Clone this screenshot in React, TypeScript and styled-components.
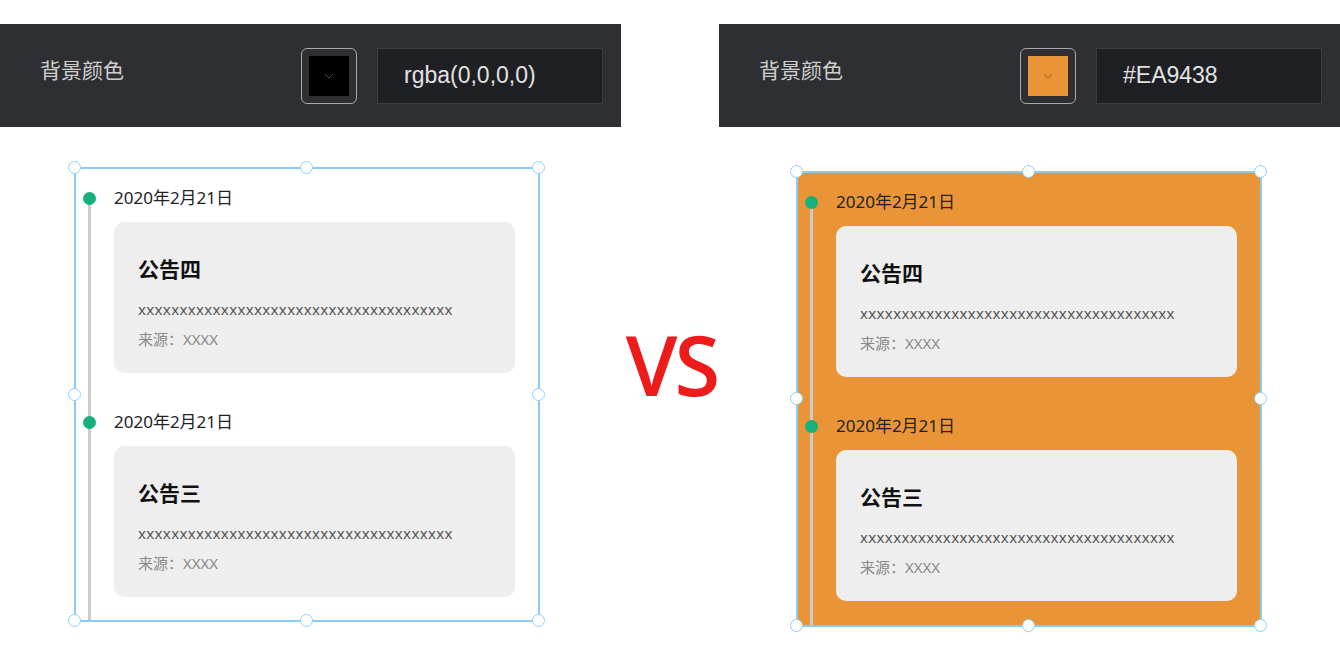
import React from 'react';
import styled, { createGlobalStyle } from 'styled-components';

const GlobalStyle = createGlobalStyle`
  html, body {
    margin: 0;
    padding: 0;
    background: #ffffff;
  }
  body {
    font-family: "Noto Sans", "Noto Sans CJK SC", sans-serif;
  }
`;

const Page = styled.div`
  display: flex;
  width: 1340px;
  height: 661px;
  padding-top: 24px;
  box-sizing: border-box;
  overflow: hidden;
`;

const Column = styled.div`
  display: flex;
  flex-direction: column;
  width: 621px;
  flex-shrink: 0;
`;

const Middle = styled.div`
  width: 98px;
  flex-shrink: 0;
  display: flex;
  justify-content: center;
  padding-top: 298px;
`;

const Versus = styled.div`
  font-family: "Open Sans", "Liberation Sans", sans-serif;
  font-size: 83px;
  font-weight: 600;
  line-height: 1;
  color: #ee1b1b;
  letter-spacing: -3px;
  height: 90px;
  padding-left: 3px;
`;

const Toolbar = styled.div`
  display: flex;
  align-items: center;
  height: 103px;
  padding: 0 18px 0 40px;
  background: #2e2f33;
`;

const Label = styled.div`
  flex: 1;
  margin-bottom: 14px;
  font-family: "Noto Sans CJK SC", sans-serif;
  font-size: 21px;
  color: #cfcfcf;
`;

const Swatch = styled.div`
  display: flex;
  align-items: center;
  justify-content: center;
  width: 56px;
  height: 56px;
  box-sizing: border-box;
  border: 1.5px solid #a9a9a9;
  border-radius: 6px;
`;

const SwatchFill = styled.div<{ $color: string }>`
  display: flex;
  align-items: center;
  justify-content: center;
  width: 40px;
  height: 40px;
  background: ${(p) => p.$color};
`;

const ColorInput = styled.div`
  display: flex;
  align-items: center;
  width: 226px;
  height: 56px;
  margin-left: 20px;
  padding-left: 26px;
  box-sizing: border-box;
  background: #1f2023;
  border: 1px solid #3b3c40;
  font-family: "Liberation Sans", sans-serif;
  font-size: 23px;
  color: #e2e2e2;
`;

const Canvas = styled.div<{ $bg: string; $left: number; $top: number; $height: number }>`
  position: relative;
  width: 466px;
  height: ${(p) => p.$height}px;
  margin: ${(p) => p.$top}px 0 0 ${(p) => p.$left}px;
  box-sizing: border-box;
  border: 2px solid #86ccf6;
  background: ${(p) => p.$bg};
`;

const Clip = styled.div`
  height: 100%;
  overflow: hidden;
  padding-top: 17px;
  box-sizing: border-box;
`;

const Handle = styled.span<{ $x: string; $y: string }>`
  position: absolute;
  left: ${(p) => p.$x};
  top: ${(p) => p.$y};
  width: 11px;
  height: 11px;
  margin: -7px 0 0 -7px;
  border: 1.5px solid #8fd1f7;
  border-radius: 50%;
  background: #ffffff;
  z-index: 2;
`;

const Item = styled.div`
  display: grid;
  grid-template-columns: 27px 1fr;
  column-gap: 11px;
  padding-right: 23px;
`;

const Rail = styled.div<{ $first: boolean }>`
  display: flex;
  justify-content: center;
  background: linear-gradient(#cbcbcb, #cbcbcb) no-repeat;
  background-size: 3px 100%;
  background-position: 12px ${(p) => (p.$first ? '12px' : '0')};
`;

const Dot = styled.span`
  width: 13px;
  height: 13px;
  margin-top: 5.5px;
  border-radius: 50%;
  background: #18b07a;
`;

const Body = styled.div`
  padding-bottom: 37px;
`;

const DateText = styled.div`
  height: 24px;
  line-height: 24px;
  font-family: "Noto Sans", "Noto Sans CJK SC", sans-serif;
  font-size: 17px;
  color: #222222;
`;

const Card = styled.div`
  margin-top: 12px;
  padding: 33px 24px 24px;
  border-radius: 10px;
  background: #eeeeee;
`;

const Title = styled.div`
  height: 26px;
  line-height: 26px;
  font-family: "Noto Sans CJK SC", sans-serif;
  font-size: 21px;
  font-weight: 700;
  color: #111111;
`;

const Content = styled.div`
  margin-top: 18px;
  height: 20px;
  line-height: 20px;
  font-family: "Noto Sans", sans-serif;
  font-size: 15px;
  letter-spacing: 0.35px;
  color: #555555;
  white-space: nowrap;
`;

const Source = styled.div`
  margin-top: 10px;
  height: 20px;
  line-height: 20px;
  font-family: "Noto Sans", "Noto Sans CJK SC", sans-serif;
  font-size: 15px;
  color: #8a8a8a;
`;

const notices = [
  { date: '2020年2月21日', title: '公告四' },
  { date: '2020年2月21日', title: '公告三' },
];

const handles: [string, string][] = [
  ['-1px', '-1px'], ['50%', '-1px'], ['calc(100% + 1px)', '-1px'],
  ['-1px', '50%'], ['calc(100% + 1px)', '50%'],
  ['-1px', 'calc(100% + 1px)'], ['50%', 'calc(100% + 1px)'], ['calc(100% + 1px)', 'calc(100% + 1px)'],
];

const Chevron = ({ color }: { color: string }) => (
  <svg width="12" height="8" viewBox="0 0 12 8">
    <path d="M2 2l4 4 4-4" fill="none" stroke={color} strokeWidth="1" />
  </svg>
);

const Panel = ({
  fill,
  chevron,
  value,
  bg,
  left,
  top,
  height,
}: {
  fill: string;
  chevron: string;
  value: string;
  bg: string;
  left: number;
  top: number;
  height: number;
}) => (
  <Column>
    <Toolbar>
      <Label>背景颜色</Label>
      <Swatch>
        <SwatchFill $color={fill}>
          <Chevron color={chevron} />
        </SwatchFill>
      </Swatch>
      <ColorInput>{value}</ColorInput>
    </Toolbar>
    <Canvas $bg={bg} $left={left} $top={top} $height={height}>
      <Clip>
        {notices.map((n, i) => (
          <Item key={i}>
            <Rail $first={i === 0}>
              <Dot />
            </Rail>
            <Body>
              <DateText>{n.date}</DateText>
              <Card>
                <Title>{n.title}</Title>
                <Content>{'x'.repeat(38)}</Content>
                <Source>来源：XXXX</Source>
              </Card>
            </Body>
          </Item>
        ))}
      </Clip>
      {handles.map(([x, y], i) => (
        <Handle key={i} $x={x} $y={y} />
      ))}
    </Canvas>
  </Column>
);

export default function App() {
  return (
    <>
      <GlobalStyle />
      <Page>
        <Panel
          fill="#000000"
          chevron="#4a4a4a"
          value="rgba(0,0,0,0)"
          bg="transparent"
          left={74}
          top={40}
          height={455}
        />
        <Middle>
          <Versus>VS</Versus>
        </Middle>
        <Panel
          fill="#ea9438"
          chevron="#9a5c1c"
          value="#EA9438"
          bg="#ea9438"
          left={77}
          top={44}
          height={456}
        />
      </Page>
    </>
  );
}
